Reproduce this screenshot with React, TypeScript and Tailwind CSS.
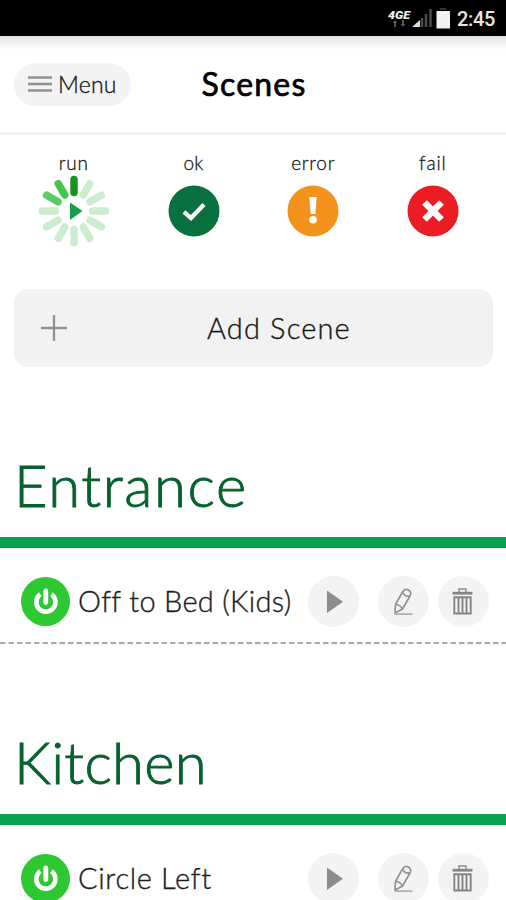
import React from "react";

const statuses = [
  { name: "run", color: "", spacing: "tracking-[0.8px]" },
  { name: "ok", color: "#09703f", spacing: "tracking-[0.2px]" },
  { name: "error", color: "#f3931e", spacing: "tracking-[0.8px]" },
  { name: "fail", color: "#eb1c24", spacing: "tracking-[0.9px]" },
];

const groups = [
  { name: "Entrance", scene: "Off to Bed (Kids)", heading: "tracking-[1.6px]", label: "tracking-[0.3px]" },
  { name: "Kitchen", scene: "Circle Left", heading: "tracking-[0.3px]", label: "tracking-[0.65px]" },
];

const StatusBar = () => (
  <div className="flex h-9 shrink-0 items-center justify-end bg-black pr-[10px] text-white">
    <svg width="68" height="36" viewBox="0 0 68 36">
      <text x="0" y="18.500" fontFamily="Roboto" fontSize="11" fontWeight="900" fontStyle="italic" fill="#eee" textLength="22" lengthAdjust="spacingAndGlyphs">4GE</text>
      <path d="M7 20l2.500 3H8v4H6v-4H4.500zM15 27l-2.500-3H14v-4h2v4h1.500z" fill="#555" />
      <path d="M24 27l8-7v7z" fill="#ddd" />
      <path d="M34 18v9M38 14v13M42.500 9v18" stroke="#4b4b4b" strokeWidth="2.500" />
      <path d="M52 8h6v2h-6z" fill="#333" />
      <path d="M48.500 11h13.500v17.500H48.500z" fill="#f2f2f2" />
    </svg>
    <span className="ml-[1px] w-[39px] whitespace-nowrap pt-[2px] font-['Roboto',sans-serif] text-[20px] font-medium leading-9 tracking-[-0.3px] text-[#e6e6e6]">2:45</span>
  </div>
);

const Spinner = () => (
  <svg width="72" height="72" viewBox="-36 -36 72 72">
    {Array.from({ length: 12 }, (_, i) => (
      <line
        key={i}
        y1="-31.500"
        y2="-18.500"
        transform={`rotate(${i * 30})`}
        stroke={i === 0 ? "#16941f" : i === 11 ? "#44c44e" : i === 10 ? "#5ccb65" : "#cbeccf"}
        strokeWidth="7.500"
        strokeLinecap="round"
      />
    ))}
    <path d="M-4-8.500L8.500 0L-4 9z" fill="#14a049" />
  </svg>
);

const StatusIcon = ({ name, color }: { name: string; color: string }) => {
  if (name === "run") return <Spinner />;
  return (
    <svg width="72" height="72" viewBox="-36 -36 72 72">
      <circle r="25.500" fill={color} />
      {name === "ok" && <path d="M-10 .8L-3 7L10-6.500" fill="none" stroke="#fff" strokeWidth="4.300" />}
      {name === "error" && (
        <>
          <path d="M-3.700-14h7.400L2.300 3h-4.600z" fill="#fff" />
          <circle cy="8.800" r="3.800" fill="#fff" />
        </>
      )}
      {name === "fail" && <path d="M-8.500-8.500L8.500 8.500M8.500-8.500L-8.500 8.500" stroke="#fff" strokeWidth="6.600" />}
    </svg>
  );
};

const PowerIcon = () => (
  <svg className="shrink-0" width="49" height="49" viewBox="-24.500 -24.500 49 49">
    <circle r="24.500" fill="#2dc832" />
    <path d="M-5.200-7.300A9.600 9.600 0 1 0 5.900-7.300" fill="none" stroke="#fff" strokeWidth="4.600" />
    <path d="M.3-10.500V1" stroke="#fff" strokeWidth="4.800" strokeLinecap="round" />
  </svg>
);

const RoundButton = ({ children, className = "" }: { children: React.ReactNode; className?: string }) => (
  <button className={`size-[51px] shrink-0 rounded-full bg-[#f3f3f3] ${className}`}>
    <svg width="51" height="51" viewBox="-25.500 -25.500 51 51">{children}</svg>
  </button>
);

const SceneGroup = ({ group }: { group: (typeof groups)[number] }) => (
  <section className="h-[277.500px] shrink-0">
    <h2 className={`h-[91px] whitespace-nowrap pl-[14px] text-[58px] font-light leading-[78px] text-[#06612d] [-webkit-text-stroke:0.9px_#06612d] ${group.heading}`}>{group.name}</h2>
    <div className="h-[11px] bg-[#06a24b]" />
    <div className="flex h-[94px] items-center pl-[21px] pt-[13px]">
      <PowerIcon />
      <span className={`ml-2 w-[230px] whitespace-nowrap pb-[2px] text-[29px] font-light leading-none text-[#1c1c1c] [-webkit-text-stroke:0.35px_#1c1c1c] ${group.label}`}>{group.scene}</span>
      <RoundButton>
        <path d="M-6.500-11L9.500 .3L-6.500 11.500z" fill="#8c8c8c" />
      </RoundButton>
      <RoundButton className="ml-[19px]">
        <g fill="none" stroke="#909090" strokeWidth="1.600" strokeLinejoin="round">
          <path d="M-8.500 11.500L-8 3L-1-9.500Q1.500-13.500 5-11.500Q8.500-9 6.500-5.500L-1 7.500z" />
          <path d="M-8 3Q-3.500 3-1 7.500M-1-9.500Q1-4.500 6.500-5.500" />
        </g>
        <path d="M-9 12.600H9" stroke="#a5a5a5" strokeWidth="1.500" />
      </RoundButton>
      <RoundButton className="ml-[9px]">
        <path d="M-4.500-9V-12.500H2.500V-9" fill="none" stroke="#8c8c8c" strokeWidth="1.500" />
        <path d="M-11-8.300H9" stroke="#858585" strokeWidth="2.800" />
        <path d="M-9.200-4.300H7.200V12H-9.200zM-5-4V12M-1-4V12M3-4V12" fill="none" stroke="#858585" strokeWidth="1.900" />
      </RoundButton>
    </div>
    <svg className="block" width="506" height="2" viewBox="0 0 506 2">
      <path d="M0 1H506" stroke="#8c8c8c" strokeWidth="1.400" strokeDasharray="5.500 3" />
    </svg>
  </section>
);

const App = () => {
  return (
    <main className="flex h-[900px] w-[506px] flex-col overflow-hidden bg-white font-['Lato',sans-serif] text-[#171717]">
      <StatusBar />
      <header className="grid h-[99px] shrink-0 grid-cols-[1fr_auto_1fr] items-center border-b-[3px] border-[#f1f1f1] bg-linear-to-b from-[#e2e2e2] to-white to-[14px] px-[14px]">
        <button className="flex h-[43px] w-[117px] items-center rounded-full bg-[#f3f3f3] pl-[14px]">
          <svg width="24" height="18" viewBox="0 0 24 18">
            <path d="M0 2.500h24M0 9h24M0 15.500h24" stroke="#919191" strokeWidth="2.300" />
          </svg>
          <span className="ml-1.5 text-[23px] font-light leading-none tracking-[0.2px] [-webkit-text-stroke:0.35px_#171717]">Menu</span>
        </button>
        <h1 className="pl-[2px] text-[32px] font-normal leading-none tracking-[1.2px] text-black [-webkit-text-stroke:0.7px_#000]">Scenes</h1>
      </header>
      <div className="flex h-[154px] shrink-0 pl-[14px] pt-[15px]">
        {statuses.map((status) => (
          <div key={status.name} className="flex w-[119.700px] flex-col items-center">
            <span className={`h-[25px] text-[19px] font-light leading-[25px] [-webkit-text-stroke:0.3px_#171717] ${status.spacing}`}>{status.name}</span>
            <StatusIcon name={status.name} color={status.color} />
          </div>
        ))}
      </div>
      <button className="mx-[14px] flex h-[78px] w-[479px] shrink-0 items-center rounded-[14px] bg-[#f2f2f2] pl-[26px]">
        <svg width="27" height="27" viewBox="0 0 27 27">
          <path d="M1 13h26M14 0v26" stroke="#929292" strokeWidth="2.300" />
        </svg>
        <span className="ml-[140px] whitespace-nowrap pb-[2px] text-[29px] font-light leading-none tracking-[1.15px] [-webkit-text-stroke:0.35px_#171717]">Add Scene</span>
      </button>
      <div className="h-[78.500px] shrink-0" />
      {groups.map((group) => (
        <SceneGroup key={group.name} group={group} />
      ))}
    </main>
  );
};

export default App;
